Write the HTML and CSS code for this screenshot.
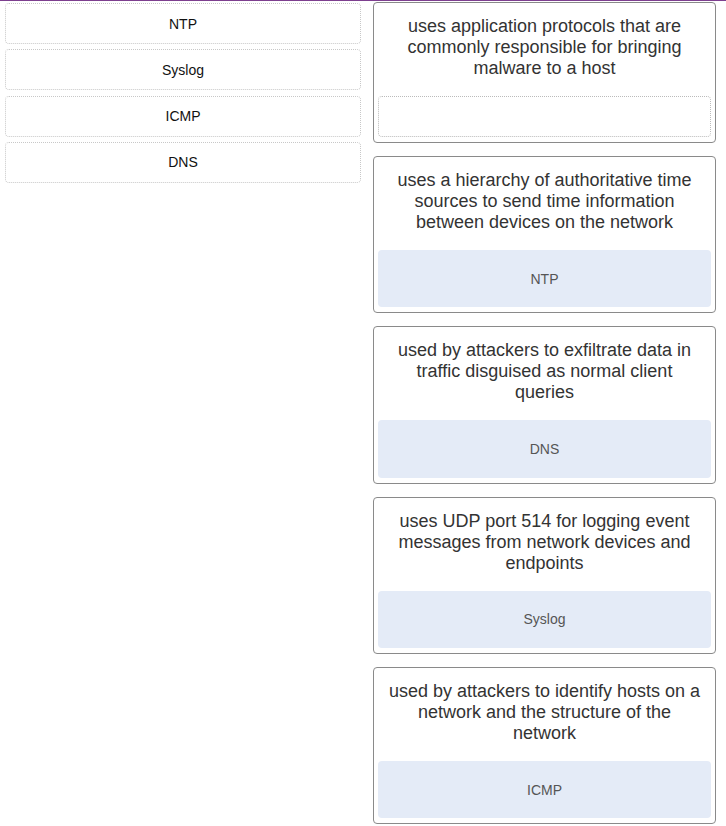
FILE: index.html
```html
<!DOCTYPE html>
<html>
<head>
<meta charset="utf-8">
<link rel="stylesheet" href="styles.css">
</head>
<body>
<div class="topline"></div>
<div class="wrap">
  <div class="options">
    <div class="option">NTP</div>
    <div class="option">Syslog</div>
    <div class="option">ICMP</div>
    <div class="option">DNS</div>
  </div>
  <div class="targets">
    <div class="card">
      <div class="desc">uses application protocols that are commonly responsible for bringing malware to a host</div>
      <div class="zone empty"></div>
    </div>
    <div class="card">
      <div class="desc">uses a hierarchy of authoritative time sources to send time information between devices on the network</div>
      <div class="zone filled">NTP</div>
    </div>
    <div class="card">
      <div class="desc">used by attackers to exfiltrate data in traffic disguised as normal client queries</div>
      <div class="zone filled">DNS</div>
    </div>
    <div class="card">
      <div class="desc">uses UDP port 514 for logging event messages from network devices and endpoints</div>
      <div class="zone filled">Syslog</div>
    </div>
    <div class="card">
      <div class="desc">used by attackers to identify hosts on a network and the structure of the network</div>
      <div class="zone filled">ICMP</div>
    </div>
  </div>
</div>
</body>
</html>
```

FILE: styles.css
```css
html, body {
  margin: 0;
  padding: 0;
  background: #fff;
  font-family: "Liberation Sans", Arial, sans-serif;
}
.topline {
  height: 1px;
  background: #7d3f8f;
}
.wrap {
  display: flex;
  align-items: flex-start;
  padding-left: 5px;
}
.options {
  width: 356px;
  display: flex;
  flex-direction: column;
  gap: 5.3px;
  padding-top: 2px;
}
.option {
  height: 39px;
  border: 1px dotted #c8c8c8;
  border-radius: 4px;
  display: flex;
  align-items: center;
  justify-content: center;
  font-size: 14px;
  color: #111;
}
.targets {
  margin-left: 12px;
  width: 343px;
  display: flex;
  flex-direction: column;
  gap: 13px;
  padding-top: 1px;
}
.card {
  border: 1px solid #8a8a8a;
  border-radius: 4px;
  padding: 13px 4px 5px 4px;
}
.desc {
  font-size: 18px;
  line-height: 21px;
  color: #333;
  text-align: center;
  padding: 0 10px;
  margin-bottom: 17px;
}
.zone {
  border-radius: 4px;
  display: flex;
  align-items: center;
  justify-content: center;
  font-size: 14px;
  color: #555;
}
.zone.empty {
  height: 39px;
  border: 1px dotted #bbb;
}
.zone.filled {
  height: 57.3px;
  background: #e4ebf7;
}
```
